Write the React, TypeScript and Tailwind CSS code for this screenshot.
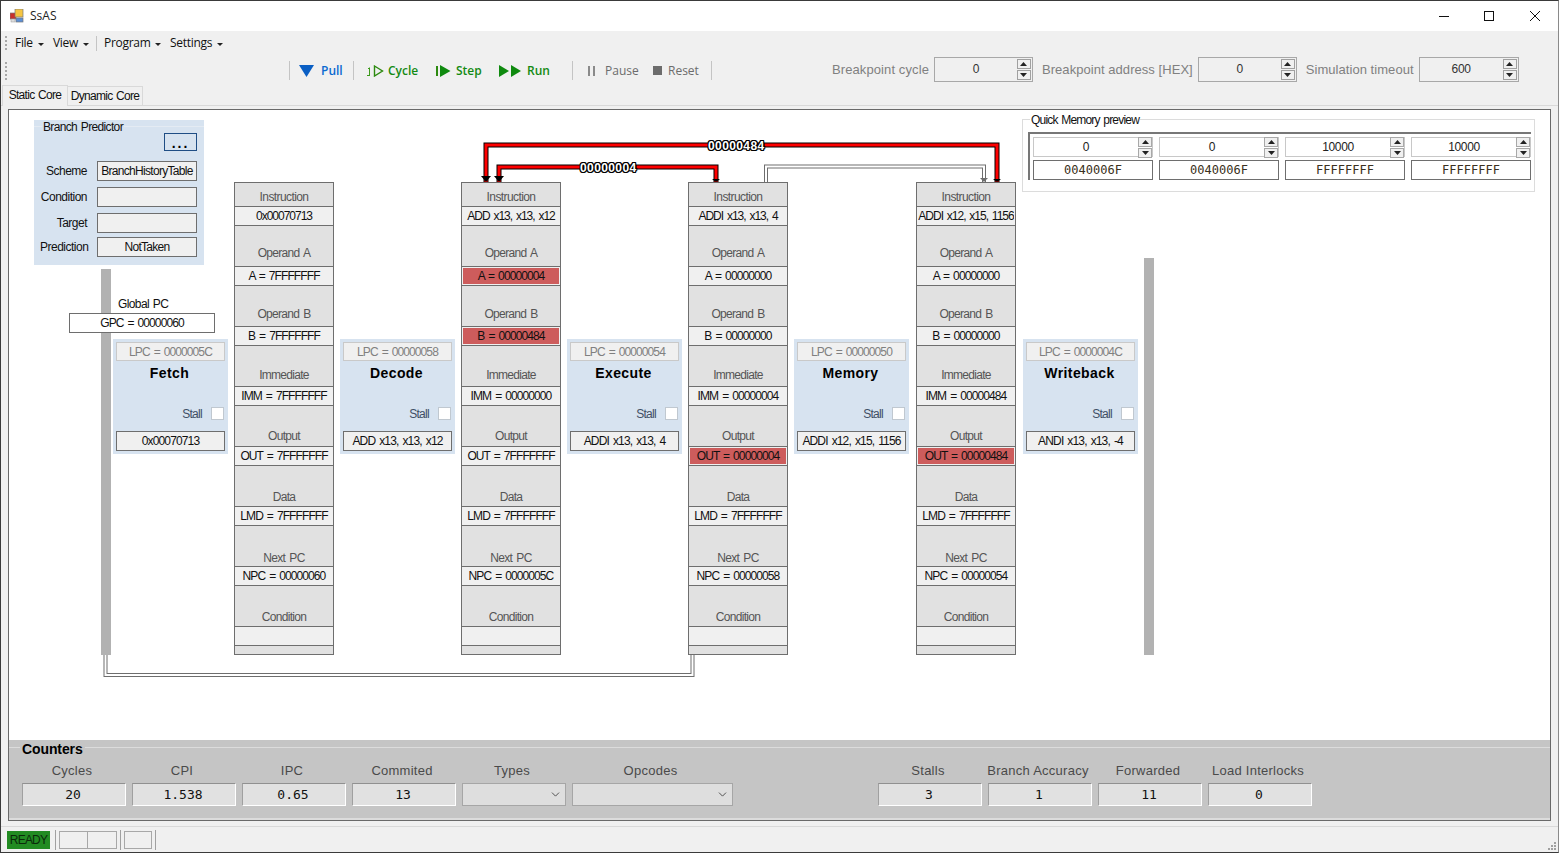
import React from 'react';
import { ChevronDown } from 'lucide-react';

// label + the bottom padding it sits on, the form spacing drifts a little going down
const regRows = [
  { label: 'Operand A', pb: 'pb-[5px]' },
  { label: 'Operand B', pb: 'pb-[4px]' },
  { label: 'Immediate', pb: 'pb-[3px]' },
  { label: 'Output', pb: 'pb-[2px]' },
  { label: 'Data', pb: 'pb-[1px]' },
  { label: 'Next PC', pb: 'pb-0' },
  { label: 'Condition', pb: 'pb-[1px]' },
];

type Reg = { left: string; instr: string; a: string; b: string; imm: string; out: string; lmd: string; npc: string; hot: string[] };

const registers: Reg[] = [
  { left: 'left-[225px]', instr: '0x00070713', a: 'A = 7FFFFFFF', b: 'B = 7FFFFFFF', imm: 'IMM = 7FFFFFFF', out: 'OUT = 7FFFFFFF', lmd: 'LMD = 7FFFFFFF', npc: 'NPC = 00000060', hot: [] },
  { left: 'left-[452px]', instr: 'ADD x13, x13, x12', a: 'A = 00000004', b: 'B = 00000484', imm: 'IMM = 00000000', out: 'OUT = 7FFFFFFF', lmd: 'LMD = 7FFFFFFF', npc: 'NPC = 0000005C', hot: ['Operand A', 'Operand B'] },
  { left: 'left-[679px]', instr: 'ADDI x13, x13, 4', a: 'A = 00000000', b: 'B = 00000000', imm: 'IMM = 00000004', out: 'OUT = 00000004', lmd: 'LMD = 7FFFFFFF', npc: 'NPC = 00000058', hot: ['Output'] },
  { left: 'left-[907px]', instr: 'ADDI x12, x15, 1156', a: 'A = 00000000', b: 'B = 00000000', imm: 'IMM = 00000484', out: 'OUT = 00000484', lmd: 'LMD = 7FFFFFFF', npc: 'NPC = 00000054', hot: ['Output'] },
];

const stages = [
  { left: 'left-[104px]', lpc: 'LPC = 0000005C', name: 'Fetch', instr: '0x00070713' },
  { left: 'left-[331px]', lpc: 'LPC = 00000058', name: 'Decode', instr: 'ADD x13, x13, x12' },
  { left: 'left-[558px]', lpc: 'LPC = 00000054', name: 'Execute', instr: 'ADDI x13, x13, 4' },
  { left: 'left-[785px]', lpc: 'LPC = 00000050', name: 'Memory', instr: 'ADDI x12, x15, 1156' },
  { left: 'left-[1014px]', lpc: 'LPC = 0000004C', name: 'Writeback', instr: 'ANDI x13, x13, -4' },
];

const sans = "font-['Liberation_Sans',Arial,sans-serif]";
const ui = "font-['Open_Sans',sans-serif]";
const mono = "font-['DejaVu_Sans_Mono',monospace]";

function RegField({ text, hot, instr }: { text: string; hot?: boolean; instr?: boolean }) {
  const tracking = instr ? 'tracking-[-1px]' : 'tracking-[-0.9px]';
  return (
    <div className="h-5 border-y border-[#6e6e6e] bg-[#f0f0f0] p-px">
      <div className={`h-full whitespace-nowrap overflow-hidden flex justify-center items-center pb-px text-[12px] [word-spacing:1.5px] text-[#111] ${tracking} ${hot ? 'bg-[#cd5c5c]' : 'bg-[#f0f0f0]'}`}>
        {text}
      </div>
    </div>
  );
}

function RegLabel({ text, pb }: { text: string; pb: string }) {
  return (
    <div className={`h-10 flex items-end justify-center text-[12px] leading-[15px] tracking-[-0.7px] [word-spacing:1.5px] text-[#555] ${pb}`}>{text}</div>
  );
}

function Register({ reg }: { reg: Reg }) {
  const vals = [reg.a, reg.b, reg.imm, reg.out, reg.lmd, reg.npc, ''];
  return (
    <div className={`absolute top-[72px] w-[100px] border border-[#6e6e6e] bg-[#e1e1e1] ${reg.left}`}>
      <div className="h-[23px] flex items-end justify-center pb-[1px] text-[12px] leading-[15px] tracking-[-0.6px] text-[#555]">Instruction</div>
      <RegField text={reg.instr} instr />
      {regRows.map((row, i) => (
        <div key={row.label}>
          <RegLabel text={row.label} pb={row.pb} />
          <RegField text={vals[i]} hot={reg.hot.includes(row.label)} />
        </div>
      ))}
      <div className="h-[8px]" />
    </div>
  );
}

function Stage({ s }: { s: (typeof stages)[number] }) {
  return (
    <div className={`absolute top-[229px] w-[115px] h-[115px] bg-[#d7e3f0] p-[3px] ${s.left}`}>
      <div className="h-[19px] border border-[#c9c9c9] bg-[#f0f0f0] flex items-center justify-center text-[12px] tracking-[-0.9px] [word-spacing:1.5px] text-[#808080]">{s.lpc}</div>
      <div className="h-6 pr-[2px] flex items-center justify-center text-[14px] tracking-[0.4px] font-bold text-black">{s.name}</div>
      <div className="mt-[22px] h-[13px] flex items-center justify-end">
        <span className="text-[12px] leading-[12px] tracking-[-0.7px] text-[#3f4f66] mr-[9px]">Stall</span>
        <span className="w-[13px] h-[13px] bg-white border border-[#c0c8d0] mr-px" />
      </div>
      <div className="mt-[11px] h-5 border border-[#6e6e6e] bg-[#f0f0f0] flex items-center justify-center whitespace-nowrap text-[12px] tracking-[-0.85px] [word-spacing:1.5px] text-[#111]">{s.instr}</div>
    </div>
  );
}

function SpinBtns({ dark }: { dark?: boolean }) {
  const c = dark ? 'border-[#a8a8a8]' : 'border-[#a0a0a0]';
  return (
    <div className="flex flex-col w-[14px] shrink-0 gap-px">
      <div className={`h-[10px] border ${c} bg-[#f0f0f0] flex items-center justify-center`}>
        <svg width="7" height="4" viewBox="0 0 7 4"><polygon points="3.5,0 7,4 0,4" fill="#222" /></svg>
      </div>
      <div className={`h-[10px] border ${c} bg-[#f0f0f0] flex items-center justify-center`}>
        <svg width="7" height="4" viewBox="0 0 7 4"><polygon points="0,0 7,0 3.5,4" fill="#222" /></svg>
      </div>
    </div>
  );
}

function ToolSpin({ value, width }: { value: string; width: string }) {
  return (
    <div className={`h-[25px] -mt-[2px] border border-[#a8a8a8] flex items-center pr-px font-normal ${width}`}>
      <span className={`flex-1 text-center text-[12px] tracking-[-0.3px] text-[#333] -mt-[2px] ${sans}`}>{value}</span>
      <SpinBtns />
    </div>
  );
}

function ToolSep({ cls }: { cls: string }) {
  return <div className={`w-px h-[19px] bg-[#c4c4c4] ${cls}`} />;
}

function Grip({ h }: { h: string }) {
  return <div className={`w-[2px] ml-[4px] border-l-2 border-dotted border-[#a8a8a8] ${h}`} />;
}

function BpRow({ label, value, mt }: { label: string; value?: string; mt: string }) {
  return (
    <div className={`flex items-center h-5 ${mt}`}>
      <div className="w-[47px] text-right text-[12px] tracking-[-0.5px] text-[#111] whitespace-nowrap">{label}</div>
      <div className="ml-[10px] w-[100px] h-5 border border-[#6e6e6e] bg-[#f0f0f0] flex items-center justify-center whitespace-nowrap text-[12px] tracking-[-0.7px] text-[#111]">{value}</div>
    </div>
  );
}

function Counter({ label, value, w = 'w-[104px]' }: { label: string; value: string; w?: string }) {
  return (
    <div className={`flex flex-col items-center ${w}`}>
      <div className="h-[20px] pr-1 flex items-center text-[13px] tracking-[0.25px] text-[#4a4a4a] whitespace-nowrap">{label}</div>
      <div className={`mt-[2px] w-full h-[23px] bg-[#e1e1e1] border-t border-l border-t-[#909090] border-l-[#a0a0a0] border-b border-b-white border-r border-r-white flex items-center justify-center pr-[2px] pt-px text-[13px] text-[#111] ${mono}`}>{value}</div>
    </div>
  );
}

function CounterSelect({ label, w }: { label: string; w: string }) {
  return (
    <div className={`flex flex-col items-center ${w}`}>
      <div className="h-[20px] pr-1 flex items-center text-[13px] tracking-[0.25px] text-[#4a4a4a]">{label}</div>
      <div className="mt-[2px] w-full h-[23px] bg-[#dedede] border border-[#a6a6a6] flex items-center justify-end pr-[3px]">
        <ChevronDown size={13} strokeWidth={1.5} color="#333" />
      </div>
    </div>
  );
}

function AppIcon() {
  return (
    <svg width="14" height="14" viewBox="0 0 14 14">
      <rect x="0" y="4" width="6" height="6" fill="#c9302c" stroke="#777" strokeWidth="0.7" />
      <rect x="5" y="0" width="8" height="8" fill="#f5c542" stroke="#777" strokeWidth="0.7" />
      <rect x="6" y="9" width="7" height="4" fill="#5b8fd6" stroke="#777" strokeWidth="0.7" />
      <rect x="1" y="10" width="4" height="3" fill="#ddd" stroke="#999" strokeWidth="0.5" />
    </svg>
  );
}

function Caret() {
  return <svg className="ml-[5px] mt-[2px]" width="6" height="3" viewBox="0 0 6 3"><polygon points="0,0 6,0 3,3" fill="#222" /></svg>;
}

export default function App() {
  return (
    <div className={`w-[1559px] h-[853px] flex flex-col bg-[#f0f0f0] border border-[#3a3a3a] border-r-[#8a8a8a] overflow-hidden ${sans}`}>
      {/* title bar */}
      <div className="h-[30px] shrink-0 bg-white flex items-center pl-[9px]">
        <AppIcon />
        <span className={`ml-[6px] text-[12px] text-[#222] ${ui}`}>SsAS</span>
        <div className="ml-auto flex items-center pr-[18px]">
          <svg width="10" height="10" viewBox="0 0 10 10" className="mr-[35px]"><path d="M0 5.5H10" stroke="#111" strokeWidth="1" /></svg>
          <svg width="10" height="10" viewBox="0 0 10 10" className="mr-[36px]"><rect x="0.5" y="0.5" width="9" height="9" fill="none" stroke="#111" strokeWidth="1" /></svg>
          <svg width="10" height="10" viewBox="0 0 10 10"><path d="M0 0L10 10M10 0L0 10" stroke="#111" strokeWidth="1" /></svg>
        </div>
      </div>

      {/* menu strip */}
      <div className={`h-6 shrink-0 flex items-center text-[12px] tracking-[-0.3px] text-[#111] ${ui}`}>
        <Grip h="h-[14px]" />
        <div className="ml-[8px] flex items-center w-[38px]">File<Caret /></div>
        <div className="flex items-center w-[43px]">View<Caret /></div>
        <div className="w-px h-[15px] bg-[#c4c4c4]" />
        <div className="ml-[7px] flex items-center w-[66px]">Program<Caret /></div>
        <div className="flex items-center">Settings<Caret /></div>
      </div>

      {/* tool strip */}
      <div className={`h-[29px] shrink-0 flex items-center pt-[2px] text-[12px] font-semibold ${ui}`}>
        <Grip h="h-[18px]" />
        <ToolSep cls="ml-[282px]" />
        <svg className="ml-[9px]" width="15" height="12" viewBox="0 0 15 12"><polygon points="0,0 15,0 7.5,12" fill="#0a5fc4" /></svg>
        <span className="ml-[7px] w-[22px] text-[#0a6ad0]">Pull</span>
        <ToolSep cls="ml-[10px]" />
        <svg className="ml-[12px]" width="18" height="12" viewBox="0 0 18 12">
          <path d="M1 10.5H4M3.5 10.5V3M2 4L3.5 2.5" fill="none" stroke="#3d9a1c" strokeWidth="1" />
          <polygon points="8.5,1 16.5,6 8.5,11" fill="none" stroke="#2d8a10" strokeWidth="1.4" />
        </svg>
        <span className="ml-[4px] w-[32px] text-[#138a13]">Cycle</span>
        <svg className="ml-[16px]" width="15" height="12" viewBox="0 0 15 12">
          <rect x="0" y="1" width="2" height="10" fill="#2d8a10" />
          <polygon points="4,0 14.5,6 4,12" fill="#0f8a0f" />
        </svg>
        <span className="ml-[5px] w-[27px] text-[#138a13]">Step</span>
        <svg className="ml-[16px]" width="23" height="12" viewBox="0 0 23 12">
          <polygon points="0,0 10,6 0,12" fill="#0f8a0f" />
          <polygon points="12,0 22,6 12,12" fill="#0f8a0f" />
        </svg>
        <span className="ml-[5px] w-[23px] text-[#138a13]">Run</span>
        <ToolSep cls="ml-[22px]" />
        <svg className="ml-[15px]" width="7" height="10" viewBox="0 0 7 10">
          <rect x="0" y="0" width="2" height="10" fill="#8a8a8a" />
          <rect x="5" y="0" width="2" height="10" fill="#8a8a8a" />
        </svg>
        <span className="ml-[10px] w-[36px] font-medium text-[#6c6c6c]">Pause</span>
        <div className="ml-[12px] w-[9px] h-[9px] bg-[#6c6c6c]" />
        <span className="ml-[6px] w-[32px] font-medium text-[#6c6c6c]">Reset</span>
        <ToolSep cls="ml-[11px]" />
        <span className={`ml-[120px] text-[13px] tracking-[0.1px] font-normal text-[#808080] -mt-[2px] whitespace-nowrap ${sans}`}>Breakpoint cycle</span>
        <ToolSpin value="0" width="ml-[5px] w-[99px]" />
        <span className={`ml-[9px] text-[13px] tracking-[0.05px] font-normal text-[#808080] -mt-[2px] whitespace-nowrap ${sans}`}>Breakpoint address [HEX]</span>
        <ToolSpin value="0" width="ml-[5px] w-[99px]" />
        <span className={`ml-[9px] text-[13px] tracking-[0.05px] font-normal text-[#808080] -mt-[2px] whitespace-nowrap ${sans}`}>Simulation timeout</span>
        <ToolSpin value="600" width="ml-[5px] w-[100px]" />
      </div>

      {/* tabs */}
      <div className="h-[21px] shrink-0 flex items-end text-[12px] tracking-[-0.7px] [word-spacing:1px] text-[#111] pl-[1px]">
        <div className="relative z-10 w-[66px] h-[21px] bg-[#f0f0f0] border border-b-0 border-[#d9d9d9] flex items-center justify-center pb-[2px] -mb-px">Static Core</div>
        <div className="w-[75px] h-[19px] bg-[#f0f0f0] border border-b-0 border-l-0 border-[#d9d9d9] flex items-center justify-center">Dynamic Core</div>
      </div>

      {/* tab page */}
      <div className="flex-1 min-h-0 flex flex-col border-t border-b border-[#d9d9d9] pt-[3px] pb-[5px] px-[7px]">
        <div className="flex-1 min-h-0 flex flex-col border border-[#696969] bg-white">
          <div className="relative flex-1 min-h-0 text-[12px]">
            {/* wires between the pipeline registers */}
            <svg className="absolute inset-0" width="1541" height="630" viewBox="0 0 1541 630">
              <path d="M96.5 545V565H683.5V545" fill="none" stroke="#6e6e6e" strokeWidth="4" />
              <path d="M96.5 545V565H683.5V545" fill="none" stroke="#fff" strokeWidth="2" />
              <path d="M757 72V56.5H975V72" fill="none" stroke="#6e6e6e" strokeWidth="4" />
              <path d="M757 72V56.5H975V72" fill="none" stroke="#fff" strokeWidth="2" />
              <polygon points="971,68 979,68 975,72" fill="#6e6e6e" />
              <path d="M988 72V35H477V72" fill="none" stroke="#000" strokeWidth="5" />
              <path d="M988 72V35H477V72" fill="none" stroke="#f00" strokeWidth="3" />
              <path d="M707 72V57H490V72" fill="none" stroke="#000" strokeWidth="5" />
              <path d="M707 72V57H490V72" fill="none" stroke="#f00" strokeWidth="3" />
              <polygon points="472,66 482,66 477,72" fill="#000" />
              <polygon points="485,66 495,66 490,72" fill="#000" />
              <polygon points="703,69 711,69 707,72" fill="#000" />
              <polygon points="984,69 992,69 988,72" fill="#000" />
            </svg>
            <span className="absolute left-[699px] top-[29px] text-[12px] leading-[14px] tracking-[0.4px] font-bold text-white [text-shadow:1px_0_#000,-1px_0_#000,0_1px_#000,0_-1px_#000,1px_1px_#000,-1px_-1px_#000,1px_-1px_#000,-1px_1px_#000]">00000484</span>
            <span className="absolute left-[571px] top-[51px] text-[12px] leading-[14px] tracking-[0.4px] font-bold text-white [text-shadow:1px_0_#000,-1px_0_#000,0_1px_#000,0_-1px_#000,1px_1px_#000,-1px_-1px_#000,1px_-1px_#000,-1px_1px_#000]">00000004</span>

            {/* branch predictor */}
            <div className="absolute left-[25px] top-[10px] w-[170px] h-[145px] bg-[#d7e3f0] pl-[6px]">
              <div className="absolute left-0 right-0 top-[6px] h-px bg-[#e4ebf3]" />
              <span className="absolute left-[8px] top-0 px-px text-[12px] leading-[14px] tracking-[-0.65px] [word-spacing:1px] text-[#111] bg-[#d7e3f0]">Branch Predictor</span>
              <div className="ml-[124px] mt-[13px] w-[33px] h-[18px] border border-[#1f4e85] flex items-center justify-center text-[14px] font-bold leading-none tracking-[2px] pt-[2px]">...</div>
              <BpRow label="Scheme" value="BranchHistoryTable" mt="mt-[10px]" />
              <BpRow label="Condition" mt="mt-[6px]" />
              <BpRow label="Target" mt="mt-[6px]" />
              <BpRow label="Prediction" value="NotTaken" mt="mt-[4px]" />
            </div>

            {/* left and right pipeline bars */}
            <div className="absolute left-[92px] top-[159px] w-[10px] h-[386px] bg-[#b2b2b2]" />
            <div className="absolute left-[1135px] top-[148px] w-[10px] h-[397px] bg-[#b2b2b2]" />

            {/* global pc */}
            <span className="absolute left-[109px] top-[187px] text-[12px] leading-[14px] tracking-[-0.6px] [word-spacing:1px] text-[#111]">Global PC</span>
            <div className="absolute left-[60px] top-[203px] w-[146px] h-5 border border-[#6e6e6e] bg-white flex items-center justify-center text-[12px] tracking-[-0.9px] [word-spacing:1.5px] text-[#111]">GPC = 00000060</div>

            {stages.map((s) => <Stage key={s.name} s={s} />)}
            {registers.map((r) => <Register key={r.left} reg={r} />)}

            {/* quick memory preview */}
            <div className="absolute left-[1013px] top-[9px] w-[513px] h-[73px] border border-[#dcdcdc] pl-[5px] pt-[12px]">
              <span className="absolute left-[7px] -top-[7px] px-px bg-white text-[12px] leading-[14px] tracking-[-0.8px] [word-spacing:1px] text-[#111]">Quick Memory preview</span>
              <div className="w-[503px] h-[48px] border-t-2 border-l-2 border-[#777] pl-[3px] pt-[3px] grid grid-cols-4 gap-x-[6px] gap-y-[3px]">
                {['0', '0', '10000', '10000'].map((v, i) => (
                  <div key={i} className="h-5 border border-[#c8c8c8] bg-white flex items-center">
                    <span className="flex-1 text-center text-[12px] tracking-[-0.4px] text-[#222]">{v}</span>
                    <SpinBtns dark />
                  </div>
                ))}
                {['0040006F', '0040006F', 'FFFFFFFF', 'FFFFFFFF'].map((v, i) => (
                  <div key={i} className={`h-5 border border-[#6e6e6e] bg-white flex items-center justify-center text-[12px] text-[#3a3020] ${mono}`}>{v}</div>
                ))}
              </div>
            </div>
          </div>

          {/* counters */}
          <div className="relative h-[80px] shrink-0 bg-[#c5c5c5] border-b-2 border-b-[#dcdcdc]">
            <div className="absolute left-0 right-0 top-[7px] h-px bg-[#dcdcdc]" />
            <span className="absolute left-[11px] top-px px-[2px] bg-[#c5c5c5] text-[14px] leading-[16px] font-bold tracking-[-0.1px] text-black">Counters</span>
            <div className="flex pt-[21px] pl-[13px] gap-x-[6px]">
              <Counter label="Cycles" value="20" />
              <Counter label="CPI" value="1.538" />
              <Counter label="IPC" value="0.65" />
              <Counter label="Commited" value="13" />
              <CounterSelect label="Types" w="w-[104px]" />
              <CounterSelect label="Opcodes" w="w-[161px]" />
              <div className="w-[133px]" />
              <Counter label="Stalls" value="3" />
              <Counter label="Branch Accuracy" value="1" />
              <Counter label="Forwarded" value="11" />
              <Counter label="Load Interlocks" value="0" />
            </div>
          </div>
        </div>
      </div>

      {/* status strip */}
      <div className="relative h-[25px] shrink-0 flex items-center pl-[6px]">
        <div className="w-[43px] h-[18px] bg-[#228b22] flex items-center justify-center text-[12px] tracking-[-0.8px] text-[#0a2a0a]">READY</div>
        <div className="ml-[5px] w-px h-[20px] bg-[#a0a0a0]" />
        <div className="ml-[3px] w-[29px] h-[18px] border border-[#a8a8a8]" />
        <div className="w-[29px] h-[18px] border border-l-0 border-[#a8a8a8]" />
        <div className="ml-[3px] w-px h-[20px] bg-[#a0a0a0]" />
        <div className="ml-[3px] w-[28px] h-[18px] border border-[#a8a8a8]" />
        <div className="ml-[3px] w-px h-[20px] bg-[#a0a0a0]" />
        <svg className="absolute right-[1px] bottom-[1px]" width="10" height="10" viewBox="0 0 10 10" fill="#a0a0a0">
          <rect x="7" y="1" width="2" height="2" /><rect x="4" y="4" width="2" height="2" /><rect x="7" y="4" width="2" height="2" />
          <rect x="1" y="7" width="2" height="2" /><rect x="4" y="7" width="2" height="2" /><rect x="7" y="7" width="2" height="2" />
        </svg>
      </div>
    </div>
  );
}
